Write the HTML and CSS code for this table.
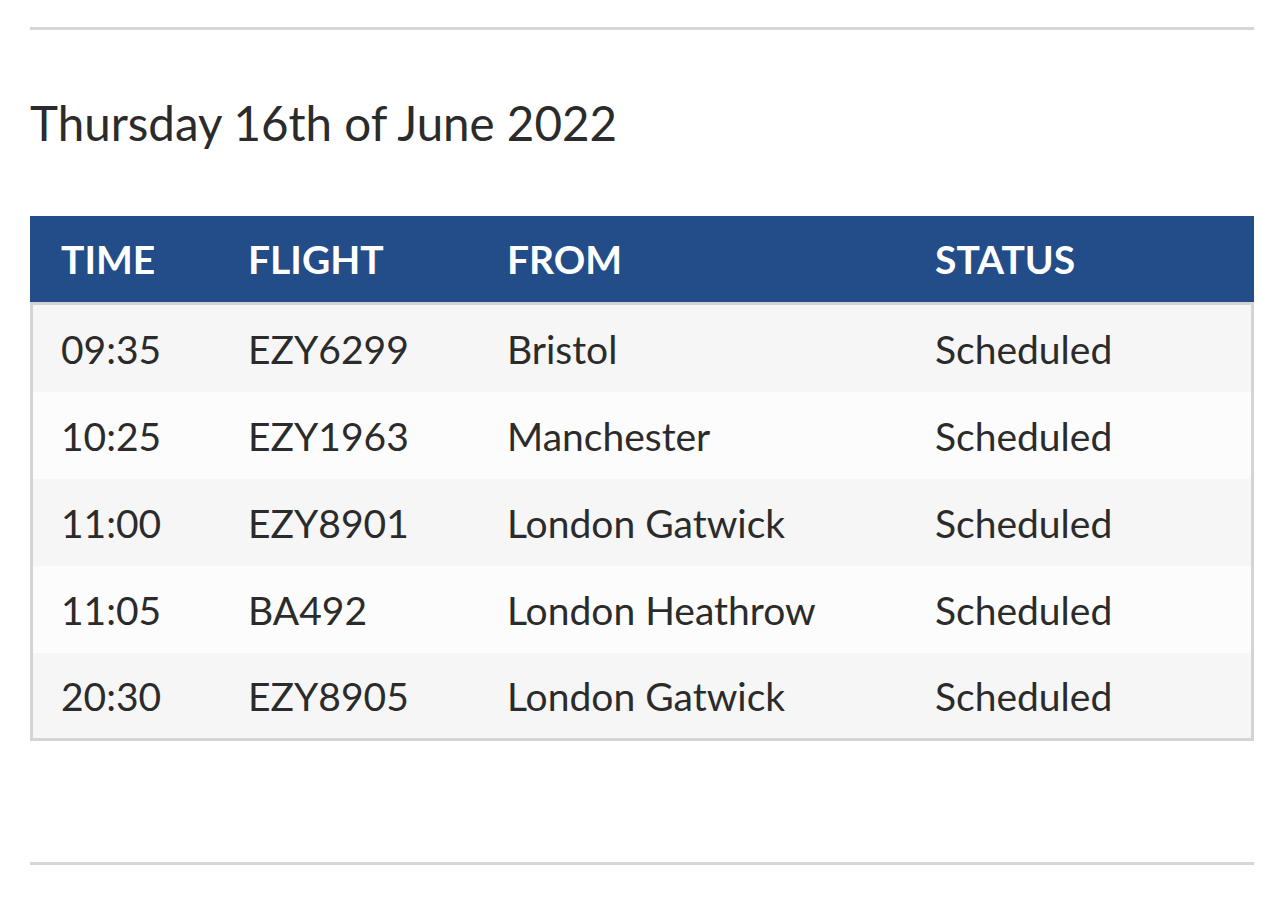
FILE: index.html
```html
<!DOCTYPE html>
<html lang="en">
<head>
<meta charset="utf-8">
<title>Arrivals</title>
<link rel="stylesheet" href="styles.css">
</head>
<body>
<main class="page">
  <hr class="rule">
  <h2 class="day-title">Thursday 16th of June 2022</h2>
  <table class="flights">
    <thead>
      <tr>
        <th class="col-time">TIME</th>
        <th class="col-flight">FLIGHT</th>
        <th class="col-from">FROM</th>
        <th class="col-status">STATUS</th>
      </tr>
    </thead>
    <tbody>
      <tr><td>09:35</td><td>EZY6299</td><td>Bristol</td><td>Scheduled</td></tr>
      <tr><td>10:25</td><td>EZY1963</td><td>Manchester</td><td>Scheduled</td></tr>
      <tr><td>11:00</td><td>EZY8901</td><td>London Gatwick</td><td>Scheduled</td></tr>
      <tr><td>11:05</td><td>BA492</td><td>London Heathrow</td><td>Scheduled</td></tr>
      <tr><td>20:30</td><td>EZY8905</td><td>London Gatwick</td><td>Scheduled</td></tr>
    </tbody>
  </table>
  <hr class="rule rule-bottom">
</main>
</body>
</html>
```

FILE: styles.css
```css
* { box-sizing: border-box; }

html, body {
  margin: 0;
  padding: 0;
  background: #ffffff;
}

body {
  font-family: Lato, "Open Sans", "Liberation Sans", sans-serif;
  color: #2b2b2b;
}

.page {
  padding: 27px 30px 0 30px;
}

.rule {
  border: 0;
  height: 3px;
  background: #d6d6d6;
  margin: 0;
}

.rule-bottom {
  margin-top: 121px;
}

.day-title {
  font-weight: 400;
  font-size: 47.5px;
  line-height: 58px;
  margin: 64px 0 0 0;
  color: #2b2b2b;
}

.flights {
  width: 100%;
  border-collapse: separate;
  border-spacing: 0;
  margin-top: 64px;
  font-size: 39px;
}

.flights th {
  background: #234d89;
  color: #ffffff;
  font-weight: 700;
  text-align: left;
  height: 86px;
  padding: 0 0 0 31px;
  vertical-align: middle;
}

.col-time { width: 187px; }
.col-flight { width: 259px; }
.col-from { width: 428px; }

.flights td {
  height: 87px;
  padding: 0 0 0 31px;
  vertical-align: middle;
  text-align: left;
  font-weight: 400;
}

.flights tbody tr:nth-child(odd) td { background: #f6f6f6; }
.flights tbody tr:nth-child(even) td { background: #fcfcfc; }

.flights td:first-child {
  border-left: 3px solid #d4d4d4;
  padding-left: 28px;
}
.flights td:last-child { border-right: 3px solid #d4d4d4; }

.flights tbody tr:first-child td {
  border-top: 3px solid #d4d4d4;
  height: 90px;
}
.flights tbody tr:last-child td {
  border-bottom: 3px solid #d4d4d4;
  height: 88px;
}
```
